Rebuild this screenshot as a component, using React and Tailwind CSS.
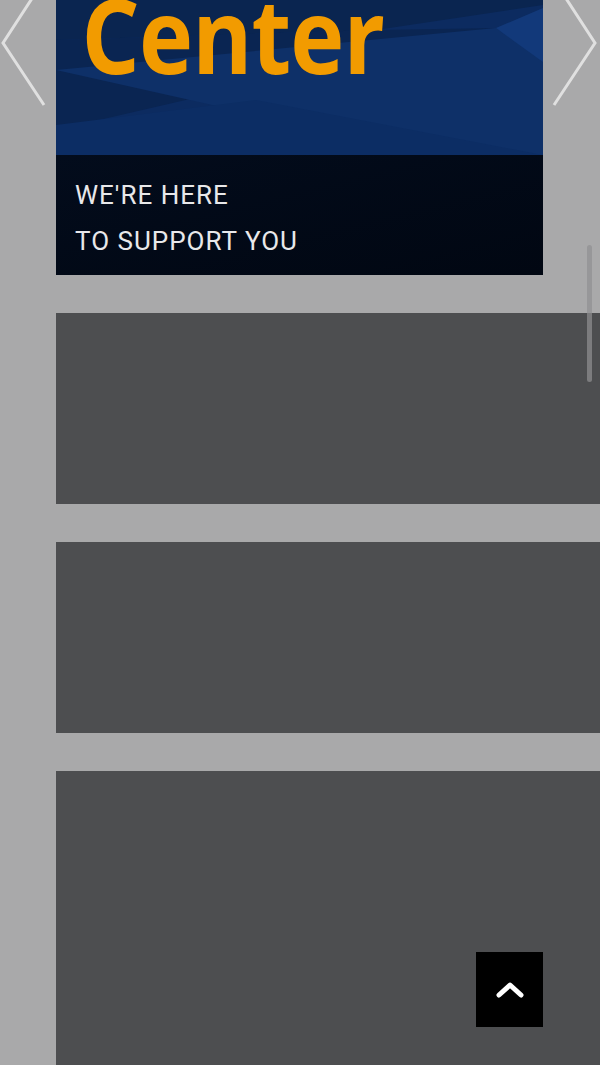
import React from 'react';

function BannerArt() {
  return (
    <svg className="absolute inset-0 h-full w-full" viewBox="0 0 487 155" preserveAspectRatio="none">
      <rect width="487" height="155" fill="#0c2b60" />
      <polygon points="0,0 487,0 487,5 320,30 0,40" fill="#0a2550" />
      <polygon points="0,40 320,30 440,28 0,130" fill="#0a2552" />
      <polygon points="0,70 440,28 487,60 487,155 380,155" fill="#0e3068" />
      <polygon points="440,28 487,8 487,62" fill="#12397a" />
      <polygon points="0,125 200,100 487,155 0,155" fill="#0c2d64" />
    </svg>
  );
}

function Chevron({ side }) {
  const pts = side === 'left' ? '44,-20 3,43 44,105' : '2,-20 43,43 2,105';
  return (
    <svg className="h-[110px] w-[48px]" viewBox="0 0 48 110">
      <polyline points={pts} fill="none" stroke="#e0e0e0" strokeWidth="3" />
    </svg>
  );
}

export default function App() {
  return (
    <div className="relative h-[1065px] overflow-hidden bg-[#a9a9aa] pl-14" style={{ fontFamily: 'Roboto, "Liberation Sans", sans-serif' }}>
      {/* slider */}
      <div className="relative w-[487px]">
        <div className="relative h-[155px] overflow-hidden">
          <BannerArt />
          <div className="relative -mt-[18px] pl-[29px] text-[104px] font-bold leading-none tracking-[-1px] text-[#f29b00]" style={{ fontFamily: '"Open Sans", sans-serif', transform: 'scaleX(0.88)', transformOrigin: 'left' }}>
            Center
          </div>
        </div>
        <div className="h-[120px] bg-gradient-to-br from-[#030c1c] to-[#010712] pl-[19px] pt-[17px] text-[26px] leading-[46px] tracking-[1px] text-[#e8e8ea]">
          <div>WE'RE HERE</div>
          <div>TO SUPPORT YOU</div>
        </div>
      </div>

      <div className="absolute left-0 top-0">
        <Chevron side="left" />
      </div>
      <div className="absolute right-0 top-0">
        <Chevron side="right" />
      </div>

      {/* cards */}
      <div className="mt-[38px] flex flex-col gap-[38px]">
        <div className="h-[191px] bg-[#4d4e50]" />
        <div className="h-[191px] bg-[#4d4e50]" />
        <div className="h-[300px] bg-[#4d4e50]" />
      </div>

      {/* scroll indicator */}
      <div className="absolute left-[587px] top-[245px] h-[137px] w-[5px] rounded-full bg-[#909092]/70" />

      {/* back to top */}
      <button className="absolute left-[476px] top-[952px] flex h-[75px] w-[67px] items-center justify-center bg-black">
        <svg width="30" height="20" viewBox="0 0 30 20">
          <polyline points="4,15 15,5 26,15" fill="none" stroke="white" strokeWidth="5" strokeLinecap="round" strokeLinejoin="round" />
        </svg>
      </button>
    </div>
  );
}
